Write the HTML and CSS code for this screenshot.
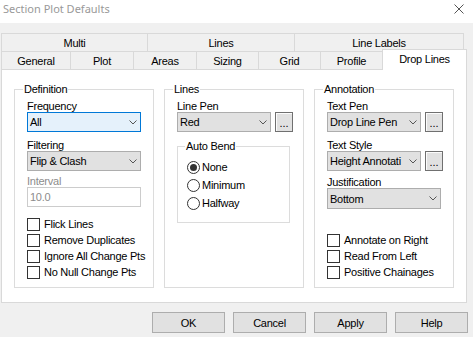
FILE: index.html
```html
<!DOCTYPE html>
<html lang="en">
<head>
  <meta charset="UTF-8">
  <title>Section Plot Defaults</title>
  <link rel="stylesheet" href="styles.css">
</head>
<body>

  <div class="titlebar">
    <span class="title">Section Plot Defaults</span>
    <svg class="close" width="10" height="10" viewBox="0 0 10 10">
      <path d="M0.5 0.5 L9.5 9.5 M9.5 0.5 L0.5 9.5" stroke="#555" stroke-width="1" fill="none"/>
    </svg>
  </div>

  <div class="dialog">
    <!-- two rows of tabs, the front row holds the selected one -->
    <div class="tab-row back">
      <div class="tab t-multi">Multi</div>
      <div class="tab t-lines">Lines</div>
      <div class="tab t-labels">Line Labels</div>
    </div>
    <div class="tab-row front">
      <div class="tab t-general">General</div>
      <div class="tab t-plot">Plot</div>
      <div class="tab t-areas">Areas</div>
      <div class="tab t-sizing">Sizing</div>
      <div class="tab t-grid">Grid</div>
      <div class="tab t-profile">Profile</div>
      <div class="tab t-drop selected">Drop Lines</div>
    </div>

    <div class="panel">
      <fieldset class="group">
        <legend>Definition</legend>
        <div class="group-body">
          <div class="label">Frequency</div>
          <div class="combo focused"><span>All</span><svg class="chev" width="8" height="5" viewBox="0 0 8 5"><path d="M0.5 0.5 L4 4 L7.5 0.5" stroke="#555" fill="none"/></svg></div>
          <div class="label next">Filtering</div>
          <div class="combo"><span>Flip &amp; Clash</span><svg class="chev" width="8" height="5" viewBox="0 0 8 5"><path d="M0.5 0.5 L4 4 L7.5 0.5" stroke="#555" fill="none"/></svg></div>
          <div class="label disabled close-next">Interval</div>
          <div class="textbox">10.0</div>
          <div class="checks def-checks">
            <div class="check"><span class="box"></span>Flick Lines</div>
            <div class="check"><span class="box"></span>Remove Duplicates</div>
            <div class="check"><span class="box"></span>Ignore All Change Pts</div>
            <div class="check"><span class="box"></span>No Null Change Pts</div>
          </div>
        </div>
      </fieldset>

      <fieldset class="group">
        <legend>Lines</legend>
        <div class="group-body">
          <div class="label">Line Pen</div>
          <div class="combo-row">
            <div class="combo short"><span>Red</span><svg class="chev" width="8" height="5" viewBox="0 0 8 5"><path d="M0.5 0.5 L4 4 L7.5 0.5" stroke="#555" fill="none"/></svg></div>
            <div class="dots">...</div>
          </div>
          <fieldset class="subgroup">
            <legend>Auto Bend</legend>
            <div class="subgroup-body">
              <div class="radio"><span class="circle on"></span>None</div>
              <div class="radio"><span class="circle"></span>Minimum</div>
              <div class="radio"><span class="circle"></span>Halfway</div>
            </div>
          </fieldset>
        </div>
      </fieldset>

      <fieldset class="group">
        <legend>Annotation</legend>
        <div class="group-body">
          <div class="label">Text Pen</div>
          <div class="combo-row">
            <div class="combo short"><span>Drop Line Pen</span><svg class="chev" width="8" height="5" viewBox="0 0 8 5"><path d="M0.5 0.5 L4 4 L7.5 0.5" stroke="#555" fill="none"/></svg></div>
            <div class="dots">...</div>
          </div>
          <div class="label next">Text Style</div>
          <div class="combo-row">
            <div class="combo short"><span>Height Annotati</span><svg class="chev" width="8" height="5" viewBox="0 0 8 5"><path d="M0.5 0.5 L4 4 L7.5 0.5" stroke="#555" fill="none"/></svg></div>
            <div class="dots">...</div>
          </div>
          <div class="label just">Justification</div>
          <div class="combo tall"><span>Bottom</span><svg class="chev" width="8" height="5" viewBox="0 0 8 5"><path d="M0.5 0.5 L4 4 L7.5 0.5" stroke="#555" fill="none"/></svg></div>
          <div class="checks ann-checks">
            <div class="check"><span class="box"></span>Annotate on Right</div>
            <div class="check"><span class="box"></span>Read From Left</div>
            <div class="check"><span class="box"></span>Positive Chainages</div>
          </div>
        </div>
      </fieldset>
    </div>

    <div class="buttons">
      <div class="button">OK</div>
      <div class="button">Cancel</div>
      <div class="button">Apply</div>
      <div class="button">Help</div>
    </div>
  </div>

</body>
</html>
```

FILE: styles.css
```css
body {
  margin: 0;
  width: 473px;
  height: 337px;
  overflow: hidden;
  background-color: #f0f0f0;
  font-family: "Liberation Sans", Arial, sans-serif;
  font-size: 11px;
  letter-spacing: -0.25px;
  color: #000;
}
.titlebar {
  height: 23px;
  background-color: #ffffff;
  display: flex;
  justify-content: space-between;
  align-items: flex-start;
}
.title {
  font-family: "Noto Sans", sans-serif;
  font-size: 11px;
  letter-spacing: 0;
  line-height: 18px;
  color: #999;
  padding-left: 3px;
}
.close {
  margin: 4px 9px 0 0;
}
.dialog {
  padding: 10px 0 0 1px;
}

/* tabs */
.tab-row {
  display: flex;
  height: 19px;
}
.tab-row.front {
  margin-top: -1px;
  align-items: flex-end;
  position: relative;
  z-index: 1;
}
.tab {
  box-sizing: border-box;
  height: 19px;
  border: 1px solid #d9d9d9;
  background-color: #f0f0f0;
  display: flex;
  align-items: center;
  justify-content: center;
  margin-left: -1px;
}
.tab:first-child {
  margin-left: 0;
}
.tab.selected {
  height: 21px;
  background-color: #ffffff;
  border-bottom: none;
  padding-bottom: 2px;
}
.t-multi { width: 147px; }
.t-lines { width: 148px; }
.t-labels { width: 170px; }
.t-general { width: 70px; }
.t-plot { width: 64px; }
.t-areas { width: 64px; }
.t-sizing { width: 63px; }
.t-grid { width: 63px; }
.t-profile { width: 63px; }
.t-drop { width: 85px; }

/* page of the selected tab */
.panel {
  box-sizing: border-box;
  width: 466px;
  height: 234px;
  margin-top: -1px;
  background-color: #ffffff;
  border: 1px solid #d9d9d9;
  padding: 13px 12px 14px 12px;
  display: flex;
  gap: 10px;
}
.group {
  box-sizing: border-box;
  width: 140px;
  margin: 0;
  padding: 0;
  min-width: 0;
  border: 1px solid #dcdcdc;
}
.group legend,
.subgroup legend {
  padding: 0 1px;
  margin-left: 8px;
  line-height: 12px;
}
.group-body {
  padding: 5px 12px 0 12px;
}
.label {
  line-height: 12px;
}
.label.next {
  margin-top: 7px;
}
.label.close-next {
  margin-top: 4px;
}
.label.just {
  margin-top: 5px;
}
.label.disabled {
  color: #8c8c8c;
}

/* drop-down lists */
.combo {
  box-sizing: border-box;
  height: 20px;
  border: 1px solid #adadad;
  background-color: #e1e1e1;
  display: flex;
  align-items: center;
  justify-content: space-between;
  padding: 0 3px 0 2px;
  white-space: nowrap;
  overflow: hidden;
}
.combo.focused {
  border-color: #0078d7;
  background-color: #e5f1fb;
}
.combo.short {
  width: 94px;
  flex: none;
}
.combo.tall {
  height: 21px;
}
.chev {
  flex: none;
}
.combo-row {
  display: flex;
  gap: 4px;
  width: 116px;
}
.dots {
  box-sizing: border-box;
  width: 18px;
  height: 20px;
  border: 1px solid #707070;
  box-shadow: inset 1px 1px 0 #fcfcfc;
  background-color: #e1e1e1;
  display: flex;
  align-items: flex-end;
  justify-content: center;
  line-height: 12px;
  padding-bottom: 2px;
  letter-spacing: 0;
}
.textbox {
  box-sizing: border-box;
  height: 20px;
  border: 1px solid #cccccc;
  background-color: #ffffff;
  color: #8c8c8c;
  padding: 0 2px;
  line-height: 18px;
}

/* check boxes */
.checks.def-checks {
  margin-top: 9px;
}
.checks.ann-checks {
  margin-top: 23px;
}
.check {
  height: 16px;
  display: flex;
  align-items: center;
  white-space: nowrap;
}
.box {
  box-sizing: border-box;
  width: 13px;
  height: 13px;
  border: 1px solid #333;
  background-color: #fff;
  margin-right: 4px;
  flex: none;
}

/* Auto Bend */
.subgroup {
  box-sizing: border-box;
  width: 113px;
  margin: 8px 0 0 0;
  padding: 0;
  min-width: 0;
  border: 1px solid #dcdcdc;
}
.subgroup legend {
  margin-left: 7px;
}
.subgroup-body {
  padding: 6px 9px 10px 9px;
}
.radio {
  height: 18px;
  display: flex;
  align-items: center;
}
.circle {
  box-sizing: border-box;
  width: 13px;
  height: 13px;
  border: 1px solid #333;
  border-radius: 50%;
  background-color: #fff;
  margin-right: 2px;
  display: flex;
  align-items: center;
  justify-content: center;
  flex: none;
}
.circle.on::after {
  content: "";
  width: 7px;
  height: 7px;
  border-radius: 50%;
  background-color: #333;
}

/* dialog buttons */
.buttons {
  display: flex;
  justify-content: flex-end;
  gap: 8px;
  padding: 9px 5px 0 0;
}
.button {
  box-sizing: border-box;
  width: 73px;
  height: 21px;
  border: 1px solid #adadad;
  background-color: #e1e1e1;
  display: flex;
  align-items: center;
  justify-content: center;
}
```
